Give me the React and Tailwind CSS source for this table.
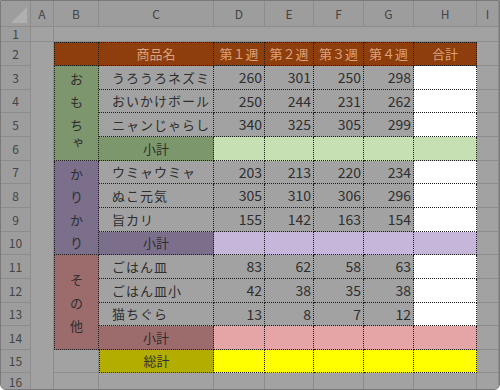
import React from 'react';

const font = { fontFamily: '"Noto Sans CJK JP", "Noto Sans", sans-serif' };

// plain grey grid cell (dimmed sheet)
const Grey = ({ className = '', children }) => (
  <div className={`border-r border-b border-[#8c8c8c] bg-[#a2a2a2] ${className}`}>{children}</div>
);

// grid row = sheet row + 1 (row 1 of the grid is the column header)
const items = [
  { row: 'row-start-4', name: 'うろうろネズミ', v: [260, 301, 250, 298] },
  { row: 'row-start-5', name: 'おいかけボール', v: [250, 244, 231, 262] },
  { row: 'row-start-6', name: 'ニャンじゃらし', v: [340, 325, 305, 299] },
  { row: 'row-start-8', name: 'ウミャウミャ', v: [203, 213, 220, 234] },
  { row: 'row-start-9', name: 'ぬこ元気', v: [305, 310, 306, 296] },
  { row: 'row-start-10', name: '旨カリ', v: [155, 142, 163, 154] },
  { row: 'row-start-12', name: 'ごはん皿', v: [83, 62, 58, 63] },
  { row: 'row-start-13', name: 'ごはん皿小', v: [42, 38, 35, 38] },
  { row: 'row-start-14', name: '猫ちぐら', v: [13, 8, 7, 12] },
];

const numCols = ['col-start-5', 'col-start-6', 'col-start-7', 'col-start-8'];

const subtotals = [
  { row: 'row-start-7', label: '小計', dark: 'bg-[#7c976b]', light: 'bg-[#c6e0b4]', edge: '' },
  { row: 'row-start-11', label: '小計', dark: 'bg-[#7b6f8c]', light: 'bg-[#c6b6d9]', edge: '' },
  { row: 'row-start-15', label: '小計', dark: 'bg-[#9c6b6c]', light: 'bg-[#e5a4a5]', edge: '' },
  { row: 'row-start-16', label: '総計', dark: 'bg-[#b3ad00]', light: 'bg-[#ffff00]', edge: 'border-l' },
];

const lightCols = ['col-start-5', 'col-start-6', 'col-start-7', 'col-start-8', 'col-start-9'];

const groups = [
  { row: 'row-start-4', chars: ['お', 'も', 'ち', 'ゃ'], bg: 'bg-[#7d966e]' },
  { row: 'row-start-8', chars: ['か', 'り', 'か', 'り'], bg: 'bg-[#7b6f8c]' },
  { row: 'row-start-12', chars: ['そ', 'の', '他'], bg: 'bg-[#9c6b6c]' },
];

const rowNums = ['row-start-2', 'row-start-3', 'row-start-4', 'row-start-5', 'row-start-6', 'row-start-7', 'row-start-8', 'row-start-9', 'row-start-10', 'row-start-11', 'row-start-12', 'row-start-13', 'row-start-14', 'row-start-15', 'row-start-16', 'row-start-17'];

const colHeads = [
  ['col-start-2', 'A'], ['col-start-3', 'B'], ['col-start-4', 'C'], ['col-start-5', 'D'],
  ['col-start-6', 'E'], ['col-start-7', 'F'], ['col-start-8', 'G'], ['col-start-9', 'H'], ['col-start-10', 'I'],
];

const dot = 'border-dotted border-[#1e1e1e]';

export default function App() {
  return (
    <div className="w-[500px] h-[390px] bg-white" style={font}>
      <div className="w-full h-full border border-[#7a7a7a] rounded-b-[6px] overflow-hidden bg-[#a2a2a2] grid grid-cols-[30px_23px_45px_115px_51px_49px_50px_50px_63px_1fr] grid-rows-[26px_15px_24px_24px_23px_24px_24px_23px_24px_24px_23px_24px_24px_23px_24px_23px_1fr]">
        {/* corner */}
        <div className="col-start-1 row-start-1 bg-[#9d9d9d] border-r border-b border-[#8c8c8c] flex items-end justify-end p-[3px]">
          <div className="w-0 h-0 border-l-[16px] border-l-transparent border-b-[16px] border-b-[#b0b0b0]" />
        </div>

        {/* column headers */}
        {colHeads.map(([c, l]) => (
          <div key={l} className={`${c} row-start-1 bg-[#9d9d9d] border-r border-b border-[#8c8c8c] flex items-center justify-center text-[12px] text-[#444]`}>
            {l}
          </div>
        ))}

        {/* row numbers */}
        {rowNums.map((r, i) => (
          <div key={r} className={`col-start-1 ${r} bg-[#9d9d9d] border-r border-b border-[#8c8c8c] flex items-center justify-center text-[12px] text-[#444]`}>
            {i + 1}
          </div>
        ))}

        {/* row 1 */}
        <Grey className="col-start-2 row-start-2" />
        <Grey className="col-start-3 row-start-2 col-span-8" />

        {/* column A */}
        <Grey className="col-start-2 row-start-3 row-span-15" />

        {/* header row 2 */}
        <div className={`col-start-3 row-start-3 bg-[#8e3d0c] border-t border-l border-r border-b ${dot}`} />
        <div className={`col-start-4 row-start-3 bg-[#8e3d0c] border-t border-r border-b ${dot} flex items-center justify-center text-[13px] text-[#dba27c]`}>商品名</div>
        {['第１週', '第２週', '第３週', '第４週'].map((t, i) => (
          <div key={t} className={`${numCols[i]} row-start-3 bg-[#8e3d0c] border-t border-r border-b ${dot} flex items-center justify-center text-[13px] text-[#dba27c]`}>{t}</div>
        ))}
        <div className={`col-start-9 row-start-3 bg-[#8e3d0c] border-t border-r border-b ${dot} flex items-center justify-center text-[13px] text-[#dba27c]`}>合計</div>
        <Grey className="col-start-10 row-start-3" />

        {/* group labels (merged B cells) */}
        {groups.map((g) => (
          <div key={g.row} className={`col-start-3 ${g.row} row-span-4 ${g.bg} border-l border-r border-b ${dot} flex flex-col items-center justify-center text-[13px] text-[#2e2e2e]`}>
            {g.chars.map((c, i) => (
              <span key={i} className={c === 'ゃ' ? 'h-[23px] leading-[23px] [writing-mode:vertical-rl]' : 'h-[23px] leading-[23px]'}>{c}</span>
            ))}
          </div>
        ))}

        {/* items */}
        {items.map((it) => (
          <React.Fragment key={it.name}>
            <div className={`col-start-4 ${it.row} bg-[#a2a2a2] border-r border-b ${dot} flex items-center pl-[13px] text-[13px] tracking-[1px] text-[#2e2e2e]`}>{it.name}</div>
            {it.v.map((v, i) => (
              <div key={i} className={`${numCols[i]} ${it.row} bg-[#a2a2a2] border-r border-b ${dot} flex items-center justify-end pr-[2px] text-[14px] text-[#2e2e2e]`}>{v}</div>
            ))}
            <div className={`col-start-9 ${it.row} bg-white border-r border-b ${dot}`} />
            <Grey className={`col-start-10 ${it.row}`} />
          </React.Fragment>
        ))}

        {/* subtotals and total */}
        {subtotals.map((s) => (
          <React.Fragment key={s.row}>
            <div className={`col-start-4 ${s.row} ${s.dark} border-r border-b ${s.edge} ${dot} flex items-center justify-center text-[13px] text-[#2e2e2e]`}>{s.label}</div>
            {lightCols.map((c) => (
              <div key={c} className={`${c} ${s.row} ${s.light} border-r border-b ${dot}`} />
            ))}
            <Grey className={`col-start-10 ${s.row}`} />
          </React.Fragment>
        ))}

        {/* B15 and row 16 */}
        <Grey className="col-start-3 row-start-16" />
        <Grey className="col-start-3 row-start-17" />
        <Grey className="col-start-4 row-start-17" />
        {lightCols.map((c) => (
          <Grey key={c} className={`${c} row-start-17`} />
        ))}
        <Grey className="col-start-10 row-start-17" />
      </div>
    </div>
  );
}
